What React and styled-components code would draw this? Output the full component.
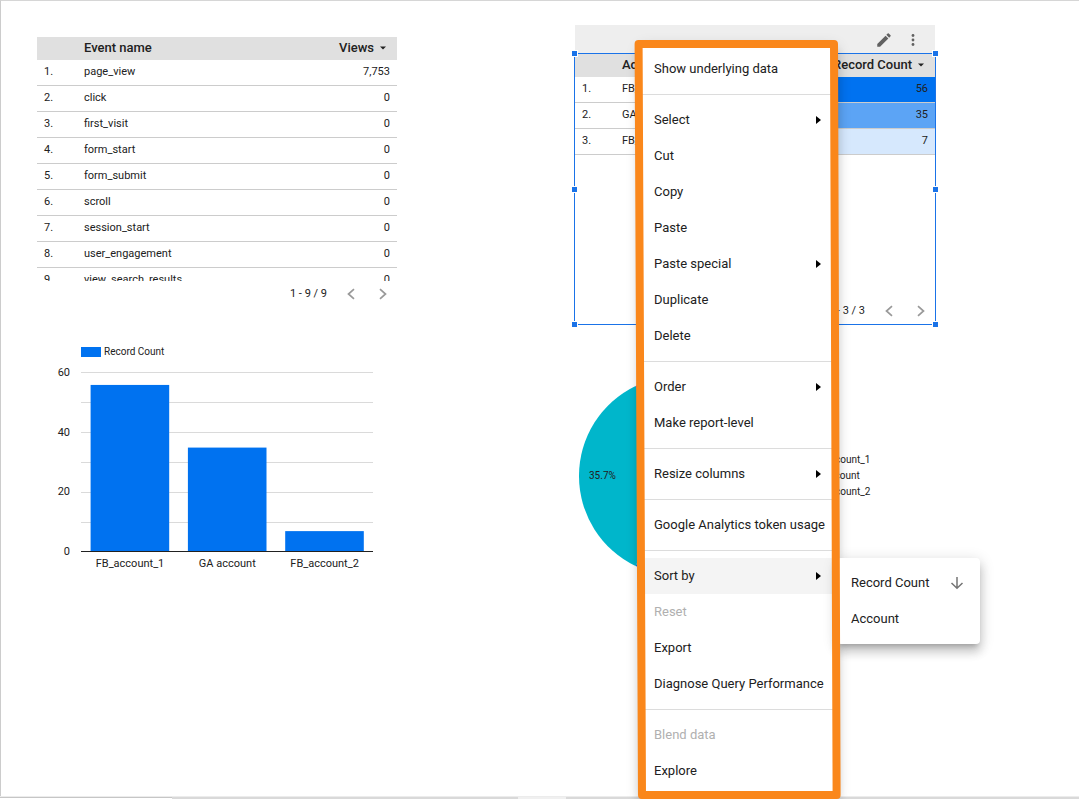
import React from 'react';
import styled, { createGlobalStyle } from 'styled-components';

const GlobalStyle = createGlobalStyle`
  * {
    box-sizing: border-box;
  }
  body {
    margin: 0;
    background: #fff;
    color: #212121;
    font-family: Roboto, 'Liberation Sans', sans-serif;
    font-size: 11px;
    line-height: 16px;
  }
  button {
    font: inherit;
    color: inherit;
    background: none;
    border: 0;
    padding: 0;
    cursor: pointer;
  }
`;

const events = [
  { name: 'page_view', value: '7,753' },
  { name: 'click', value: '0' },
  { name: 'first_visit', value: '0' },
  { name: 'form_start', value: '0' },
  { name: 'form_submit', value: '0' },
  { name: 'scroll', value: '0' },
  { name: 'session_start', value: '0' },
  { name: 'user_engagement', value: '0' },
  { name: 'view_search_results', value: '0' }
];

const accounts = [
  { name: 'FB_account_1', value: 56, heat: '#0072f0' },
  { name: 'GA account', value: 35, heat: '#5ca4f5' },
  { name: 'FB_account_2', value: 7, heat: '#d6e8fd' }
];

const sliceColors = ['#0072f0', '#00b6cb', '#f10096'];

const menuGroups = [
  [{ label: 'Show underlying data' }],
  [
    { label: 'Select', sub: true },
    { label: 'Cut' },
    { label: 'Copy' },
    { label: 'Paste' },
    { label: 'Paste special', sub: true },
    { label: 'Duplicate' },
    { label: 'Delete' }
  ],
  [{ label: 'Order', sub: true }, { label: 'Make report-level' }],
  [{ label: 'Resize columns', sub: true }],
  [{ label: 'Google Analytics token usage' }],
  [
    { label: 'Sort by', sub: true, active: true },
    { label: 'Reset', disabled: true },
    { label: 'Export' },
    { label: 'Diagnose Query Performance' }
  ],
  [{ label: 'Blend data', disabled: true }, { label: 'Explore' }]
];

const Page = styled.div`
  position: relative;
  display: flex;
  flex-direction: column;
  min-height: 100vh;
`;

const Canvas = styled.main`
  flex: 1;
  display: grid;
  grid-template-columns: 1fr 1fr;
  padding-right: 2px;
  border-top: 1px solid #d6d6d6;
  border-left: 1px solid #ccc;
`;

const Column = styled.section`
  display: flex;
  flex-direction: column;
  align-items: flex-start;
  gap: ${props => props.$gap};
  padding: ${props => props.$top} 0 0 36px;
`;

const Widget = styled.div`
  position: relative;
  width: 100%;
  max-width: 360px;
`;

const TableClip = styled.div`
  height: ${props => props.$height};
  overflow: hidden;
`;

const Table = styled.table`
  width: 100%;
  border-collapse: separate;
  border-spacing: 0;
  table-layout: fixed;

  th {
    height: 23px;
    padding: 0 0 2px;
    background: #e0e0e0;
    font-size: 13px;
    font-weight: 500;
    text-align: left;
    white-space: nowrap;
  }
  td {
    height: 26px;
    padding: 0 0 2px;
    border-bottom: 1px solid #ccc;
  }
  th:first-child,
  td:first-child {
    width: 47px;
    padding-left: 7px;
  }
  th:last-child {
    width: 110px;
    padding-right: 11px;
    text-align: right;
  }
  td:last-child {
    padding-right: 7px;
    text-align: right;
  }
`;

const HeatCell = styled.td`
  background: ${props => props.$heat};
`;

const SortButton = styled.button`
  display: inline-flex;
  align-items: center;
  gap: 6px;
`;

const Pager = styled.div`
  display: flex;
  align-items: center;
  justify-content: flex-end;
  gap: 8px;
  height: 26px;
  padding-right: 2px;

  button {
    display: flex;
    align-items: center;
    justify-content: center;
    width: 24px;
    height: 24px;
  }
`;

const PagerText = styled.span`
  padding-right: 4px;
`;

const Toolbar = styled.div`
  display: flex;
  align-items: center;
  justify-content: flex-end;
  gap: 7px;
  height: 29px;
  padding-right: 11px;
  background: #eee;

  button {
    display: flex;
    align-items: center;
    justify-content: center;
    width: 22px;
    height: 24px;
  }
`;

const Selected = styled.div`
  position: relative;
`;

const Outline = styled.div`
  position: absolute;
  inset: -1px;
  border: 1px solid #1a73e8;
  pointer-events: none;
`;

const Handle = styled.span`
  position: absolute;
  ${props => props.$side}: -4px;
  ${props => props.$edge};
  width: 7px;
  height: 7px;
  border: 1px solid #fff;
  background: #1a73e8;
`;

const BarLegend = styled.div`
  display: flex;
  align-items: center;
  gap: 3px;
  padding-left: 44px;
  font-size: 10px;
`;

const Swatch = styled.span`
  width: 20px;
  height: 10px;
  background: #0072f0;
`;

const Chart = styled.svg`
  display: block;
  overflow: visible;
  font-size: 11px;
  fill: #212121;
`;

const PieRow = styled.div`
  display: flex;
  align-items: center;
  gap: 17px;
  padding-left: 4px;
`;

const PieLegend = styled.ul`
  margin: 0;
  padding: 0;
  list-style: none;
  font-size: 10px;

  li {
    display: flex;
    align-items: center;
    gap: 4px;
  }
`;

const Dot = styled.span`
  width: 8px;
  height: 8px;
  border-radius: 50%;
  background: ${props => props.$color};
`;

const Menu = styled.div`
  position: absolute;
  left: ${props => props.$left};
  top: ${props => props.$top};
  width: ${props => props.$width};
  padding: 7px 0;
  border-radius: 4px;
  background: #fff;
  box-shadow: 0 5px 5px -3px rgba(0, 0, 0, 0.2),
    0 8px 10px 1px rgba(0, 0, 0, 0.14), 0 3px 14px 2px rgba(0, 0, 0, 0.12);
`;

const MenuGroup = styled.div`
  & + & {
    margin-top: 7px;
    padding-top: 7px;
    border-top: 1px solid #dcdcdc;
  }
`;

const MenuItem = styled.button.attrs({ type: 'button', role: 'menuitem' })`
  && {
    display: flex;
    align-items: center;
    justify-content: space-between;
    width: 100%;
    height: 36px;
    padding: 0 16px 0 14px;
    font-size: 13px;
    text-align: left;
    white-space: nowrap;
    color: ${props => (props.disabled ? '#b0b0b0' : '#212121')};
    background: ${props => (props.$active ? '#f4f4f4' : 'transparent')};
  }
`;

const Highlight = styled.svg`
  position: absolute;
  left: 630px;
  top: 36px;
  pointer-events: none;
`;

const StatusBar = styled.footer`
  display: grid;
  grid-template-columns: 172px 346px 48px 1fr;
  height: 3px;
  border-top: 1px solid #ececec;

  span {
    background: #d9d9d9;
  }
  span:first-child {
    border-top: 1px solid #c6c6c6;
    background: #fff;
  }
  span:nth-child(3) {
    background: #f0f0f0;
  }
`;

const SortCaret = () => (
  <svg width="6" height="4" viewBox="0 0 6 4">
    <path d="M0 0.5h6L3 3.5z" fill="#212121" />
  </svg>
);

const Chevron = ({ flip }) => (
  <svg width="8" height="12" viewBox="0 0 8 12" fill="none" stroke="#999">
    <path
      d={flip ? 'M1 1.2L6.5 6 1 10.8' : 'M7 1.2L1.5 6 7 10.8'}
      strokeWidth="1.7"
    />
  </svg>
);

const PagerBar = ({ range }) => (
  <Pager>
    <PagerText>{range}</PagerText>
    <button type="button" aria-label="Previous page">
      <Chevron />
    </button>
    <button type="button" aria-label="Next page">
      <Chevron flip />
    </button>
  </Pager>
);

const DataTable = ({ dimension, metric, rows }) => (
  <Table>
    <thead>
      <tr>
        <th aria-label="Row" />
        <th>{dimension}</th>
        <th>
          <SortButton type="button">
            {metric}
            <SortCaret />
          </SortButton>
        </th>
      </tr>
    </thead>
    <tbody>
      {rows.map((row, i) => (
        <tr key={row.name}>
          <td>{i + 1}.</td>
          <td>{row.name}</td>
          <HeatCell $heat={row.heat}>{row.value}</HeatCell>
        </tr>
      ))}
    </tbody>
  </Table>
);

const BarChart = () => {
  const base = 191;
  const scale = 179 / 60;
  return (
    <Chart width="360" height="216" viewBox="0 0 360 216">
      {[10, 20, 30, 40, 50, 60].map(v => (
        <rect
          key={v}
          x="44"
          y={Math.ceil(base - v * scale)}
          width="292"
          height="1"
          fill="#dadada"
        />
      ))}
      {[0, 20, 40, 60].map(v => (
        <text key={v} x="33" y={base + 4 - v * scale} textAnchor="end">
          {v}
        </text>
      ))}
      {accounts.map((a, i) => (
        <g key={a.name}>
          <rect
            x={53.6 + i * 97.3}
            y={base + 1 - a.value * scale}
            width="78.6"
            height={a.value * scale}
            fill="#0072f0"
          />
          <text x={93 + i * 97.3} y={base + 16} textAnchor="middle">
            {a.name}
          </text>
        </g>
      ))}
      <rect x="44" y={base} width="292" height="1" fill="#212121" />
    </Chart>
  );
};

const PieChart = () => {
  const total = accounts.reduce((sum, a) => sum + a.value, 0);
  const point = v => {
    const angle = (v / total) * Math.PI * 2;
    return `${100 + 100 * Math.sin(angle)} ${100 - 100 * Math.cos(angle)}`;
  };
  let start = 0;
  return (
    <Chart width="200" height="200" viewBox="0 0 200 200">
      {accounts.map((a, i) => {
        const from = start;
        start += a.value;
        const large = a.value / total > 0.5 ? 1 : 0;
        return (
          <path
            key={a.name}
            d={`M100 100L${point(from)}A100 100 0 ${large} 1 ${point(start)}Z`}
            fill={sliceColors[i]}
          />
        );
      })}
      <text x="10" y="103" fontSize="10">
        35.7%
      </text>
    </Chart>
  );
};

const ContextMenu = () => (
  <Menu role="menu" $left="640px" $top="44px" $width="197px">
    {menuGroups.map(group => (
      <MenuGroup key={group[0].label}>
        {group.map(item => (
          <MenuItem
            key={item.label}
            disabled={item.disabled}
            $active={item.active}
          >
            {item.label}
            {item.sub && (
              <svg width="5" height="8" viewBox="0 0 5 8">
                <path d="M0 0l5 4-5 4z" />
              </svg>
            )}
          </MenuItem>
        ))}
      </MenuGroup>
    ))}
  </Menu>
);

const SortMenu = () => (
  <Menu role="menu" $left="837px" $top="558px" $width="143px">
    <MenuItem>
      Record Count
      <svg width="14" height="14" viewBox="0 0 14 14" fill="none">
        <path d="M7 1v11M1.5 7L7 12.3 12.5 7" stroke="#757575" strokeWidth="1.5" />
      </svg>
    </MenuItem>
    <MenuItem>Account</MenuItem>
  </Menu>
);

const App = () => (
  <>
    <GlobalStyle />
    <Page>
      <Canvas>
        <Column $top="36px" $gap="37px">
          <Widget>
            <TableClip $height="244px">
              <DataTable dimension="Event name" metric="Views" rows={events} />
            </TableClip>
            <PagerBar range="1 - 9 / 9" />
          </Widget>
          <Widget>
            <BarLegend>
              <Swatch />
              Record Count
            </BarLegend>
            <BarChart />
          </Widget>
        </Column>
        <Column $top="24px" $gap="52px">
          <Widget>
            <Toolbar>
              <button type="button" aria-label="Edit">
                <svg width="18" height="18" viewBox="0 0 24 24" fill="#616161">
                  <path d="M3 17.25V21h3.75L17.81 9.94l-3.75-3.75L3 17.25zM20.71 7.04a1 1 0 0 0 0-1.41l-2.34-2.34a1 1 0 0 0-1.41 0l-1.83 1.83 3.75 3.75 1.83-1.83z" />
                </svg>
              </button>
              <button type="button" aria-label="More">
                <svg width="4" height="12" viewBox="0 0 4 12" fill="#616161">
                  <circle cx="2" cy="1.5" r="1.4" />
                  <circle cx="2" cy="6" r="1.4" />
                  <circle cx="2" cy="10.5" r="1.4" />
                </svg>
              </button>
            </Toolbar>
            <Selected>
              <TableClip $height="244px">
                <DataTable
                  dimension="Account"
                  metric="Record Count"
                  rows={accounts}
                />
              </TableClip>
              <PagerBar range="1 - 3 / 3" />
              <Outline>
                {['top: -4px', 'top: calc(50% - 3px)', 'bottom: -4px'].map(
                  edge => (
                    <React.Fragment key={edge}>
                      <Handle $side="left" $edge={edge} />
                      <Handle $side="right" $edge={edge} />
                    </React.Fragment>
                  )
                )}
              </Outline>
            </Selected>
          </Widget>
          <PieRow>
            <PieChart />
            <PieLegend>
              {accounts.map((a, i) => (
                <li key={a.name}>
                  <Dot $color={sliceColors[i]} />
                  {a.name}
                </li>
              ))}
            </PieLegend>
          </PieRow>
        </Column>
      </Canvas>
      <StatusBar>
        <span />
        <span />
        <span />
        <span />
      </StatusBar>
      <ContextMenu />
      <SortMenu />
      <Highlight width="216" height="763" viewBox="630 36 216 763">
        <path
          d="M638.6 44H834L836.6 795H642Z"
          fill="none"
          stroke="#fa871b"
          strokeWidth="8"
          strokeLinejoin="round"
        />
      </Highlight>
    </Page>
  </>
);

export default App;
